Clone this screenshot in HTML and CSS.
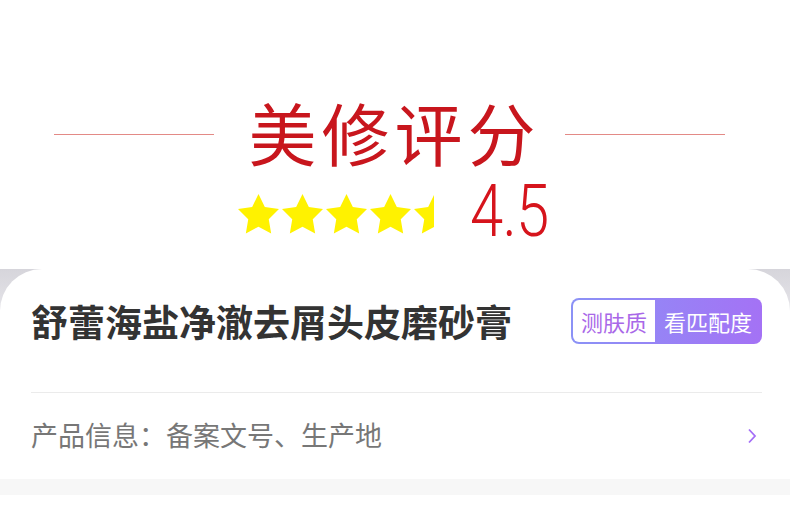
FILE: index.html
```html
<!DOCTYPE html>
<html>
<head>
	<title>美修评分</title>
	<meta charset="utf-8">
	<link rel="stylesheet" href="styles.css">
</head>
<body>
	<div class="top">
		<div class="title-row">
			<span class="rule"></span>
			<h1 class="title">美修评分</h1>
			<span class="rule"></span>
		</div>
		<div class="score-row">
			<div class="stars">
				<svg class="star" viewBox="2 2 20 19.3" preserveAspectRatio="none"><path d="M12 2l3.09 6.26L22 9.27l-5 4.87 1.18 6.88L12 17.77l-6.18 3.25L7 14.14 2 9.27l6.91-1.01L12 2z"/></svg>
				<svg class="star" viewBox="2 2 20 19.3" preserveAspectRatio="none"><path d="M12 2l3.09 6.26L22 9.27l-5 4.87 1.18 6.88L12 17.77l-6.18 3.25L7 14.14 2 9.27l6.91-1.01L12 2z"/></svg>
				<svg class="star" viewBox="2 2 20 19.3" preserveAspectRatio="none"><path d="M12 2l3.09 6.26L22 9.27l-5 4.87 1.18 6.88L12 17.77l-6.18 3.25L7 14.14 2 9.27l6.91-1.01L12 2z"/></svg>
				<svg class="star" viewBox="2 2 20 19.3" preserveAspectRatio="none"><path d="M12 2l3.09 6.26L22 9.27l-5 4.87 1.18 6.88L12 17.77l-6.18 3.25L7 14.14 2 9.27l6.91-1.01L12 2z"/></svg>
				<span class="half"><svg class="star" viewBox="2 2 20 19.3" preserveAspectRatio="none"><path d="M12 2l3.09 6.26L22 9.27l-5 4.87 1.18 6.88L12 17.77l-6.18 3.25L7 14.14 2 9.27l6.91-1.01L12 2z"/></svg></span>
			</div>
			<span class="score">4.5</span>
		</div>
	</div>

	<div class="sheet">
		<div class="card">
			<div class="name-row">
				<h2 class="name">舒蕾海盐净澈去屑头皮磨砂膏</h2>
				<div class="match">
					<span class="match-left">测肤质</span>
					<span class="match-right">看匹配度</span>
				</div>
			</div>
			<div class="info-row">
				<span class="info">产品信息：备案文号、生产地</span>
				<svg class="chevron" viewBox="0 0 10 16"><path d="M2 1.5l6 6.5-6 6.5"/></svg>
			</div>
		</div>
		<div class="gap"></div>
	</div>
</body>
</html>
```

FILE: styles.css
```css
*{
	box-sizing: border-box;
}
body{
	margin: 0;
	background: #fff;
	font-family: "Noto Sans CJK SC", "Noto Sans", sans-serif;
}
.top{
	height: 269px;
	padding-top: 100px;
}
.title-row{
	display: flex;
	align-items: center;
	justify-content: center;
	height: 68px;
	padding-right: 11px;
}
.rule{
	width: 160px;
	height: 1px;
	background: #e38a86;
}
.title{
	margin: -4px 24px 0 34px;
	font-size: 68px;
	line-height: 68px;
	font-weight: 400;
	letter-spacing: 5px;
	color: #c8161d;
}
.score-row{
	display: flex;
	align-items: center;
	justify-content: center;
	height: 60px;
	margin-top: 13px;
	padding-right: 2px;
}
.stars{
	display: flex;
	gap: 3px;
	margin-right: 36px;
	margin-top: 6px;
}
.star{
	display: block;
	width: 41px;
	height: 40px;
	fill: #fff200;
}
.half{
	width: 20px;
	overflow: hidden;
}
.score{
	font-family: Roboto, sans-serif;
	font-weight: 300;
	font-size: 73px;
	line-height: 56px;
	color: #d6141c;
	transform: scaleX(0.82);
	transform-origin: left center;
	width: 80px;
	letter-spacing: -1px;
}
.sheet{
	background: linear-gradient(#d6d5db, #ecebef 60px, #f2f2f4);
}
.card{
	background: #fff;
	border-radius: 42px 42px 0 0;
	padding: 0 28px 0 31px;
}
.name-row{
	display: flex;
	align-items: center;
	justify-content: space-between;
	height: 124px;
	padding-bottom: 20px;
	border-bottom: 1px solid #ebebeb;
}
.name{
	margin: 0;
	font-size: 37px;
	font-weight: 700;
	color: #333;
}
.match{
	display: flex;
	height: 46px;
	padding: 2px;
	border-radius: 8px;
	background: linear-gradient(90deg, #8b92f6, #a472f5);
}
.match-left,
.match-right{
	display: flex;
	align-items: center;
	font-size: 22px;
	padding: 0 8px;
}
.match-left{
	background: #fff;
	border-radius: 6px 0 0 6px;
	color: #a968e8;
	width: 82px;
	justify-content: center;
}
.match-right{
	color: #fff;
	padding: 0 8px 0 9px;
}
.info-row{
	display: flex;
	align-items: center;
	justify-content: space-between;
	height: 86px;
	padding-right: 5px;
}
.info{
	font-size: 27px;
	color: #777;
	margin-top: -4px;
}
.chevron{
	width: 10px;
	height: 16px;
	fill: none;
	stroke: #a46ef7;
	stroke-width: 1.8;
}
.gap{
	height: 16px;
	background: #f7f7f7;
}
```
